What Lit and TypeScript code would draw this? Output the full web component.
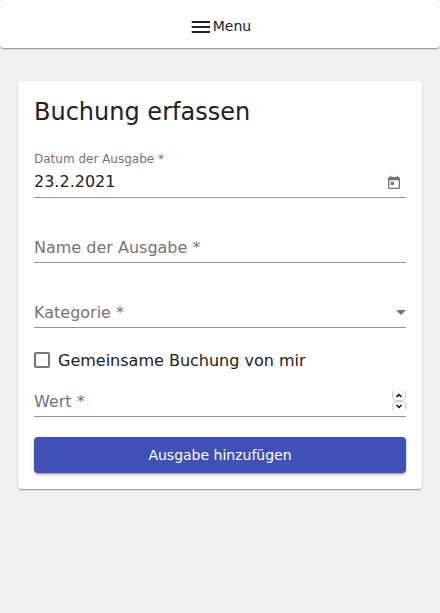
import { LitElement, html, css } from "lit";
import { customElement, property } from "lit/decorators.js";

@customElement("app-field")
class AppField extends LitElement {
  @property() label = "";
  @property() value = "";

  static styles = css`
    :host { display: flex; flex-direction: column; box-sizing: border-box; height: 50px; border-bottom: 1px solid #949494; }
    .float { height: 14px; margin-top: 4px; font-size: 12px; line-height: 14px; color: #757575; }
    .row { display: flex; align-items: center; justify-content: space-between; height: 20px; margin-top: auto; margin-bottom: 4px; }
    .text { line-height: 20px; color: #212121; }
    .placeholder { color: #757575; }
    .filled { margin-bottom: 5px; }
  `;

  render() {
    return this.value
      ? html`<div class="float">${this.label}</div>
          <div class="row filled"><span class="text">${this.value}</span><slot></slot></div>`
      : html`<div class="row"><span class="text placeholder">${this.label}</span><slot></slot></div>`;
  }
}

@customElement("app-root")
class AppRoot extends LitElement {
  static styles = css`
    :host {
      display: block; box-sizing: border-box; min-height: 613px; background: #f0f0f0;
      font: 16px/20px "DejaVu Sans", sans-serif; color: #212121;
    }
    .bar {
      display: flex; align-items: center; justify-content: center; box-sizing: border-box; height: 48px; padding-top: 6px;
      background: #fff; border-radius: 4px; font-size: 14px;
      box-shadow: 0 2px 1px -1px rgba(0,0,0,.2), 0 1px 1px 0 rgba(0,0,0,.14), 0 1px 3px 0 rgba(0,0,0,.12);
    }
    .menu { width: 24px; height: 24px; fill: #212121; }
    .bar-text { line-height: 20px; margin-bottom: 2px; }
    .card {
      display: flex; flex-direction: column; box-sizing: border-box; height: 408px; margin: 33px 18px 0; padding: 16px;
      background: #fff; border-radius: 4px;
      box-shadow: 0 2px 1px -1px rgba(0,0,0,.2), 0 1px 1px 0 rgba(0,0,0,.14), 0 1px 3px 0 rgba(0,0,0,.12);
    }
    h1 { margin: 0 0 22px; padding-top: 1px; font-size: 24px; font-weight: 400; line-height: 28px; }
    .spaced { margin-top: 15px; }
    .check { display: flex; align-items: center; gap: 8px; height: 20px; margin-top: 22px; }
    .check-label { padding-top: 2px; }
    .box { box-sizing: border-box; width: 16px; height: 16px; border: 2px solid #757575; border-radius: 2px; }
    .amount { height: 47px; }
    .calendar { width: 16px; height: 16px; margin: 2px 4px 0 0; fill: #757575; }
    .arrow { width: 10px; height: 5px; margin-bottom: 1px; fill: #757575; }
    .spinner { width: 14px; height: 20px; margin-bottom: 2px; fill: none; }
    .edge { stroke: #d0cbc7; }
    .chevron { stroke: #111; stroke-width: 1.6; }
    button {
      height: 36px; margin-top: 20px; padding: 0; border: 0; border-radius: 4px; background: #3f51b5; color: #fff;
      font: 14px/36px "DejaVu Sans", sans-serif;
      box-shadow: 0 3px 1px -2px rgba(0,0,0,.2), 0 2px 2px 0 rgba(0,0,0,.14), 0 1px 5px 0 rgba(0,0,0,.12);
    }
  `;

  render() {
    return html`
      <header class="bar">
        <svg class="menu" viewBox="0 0 24 24"><path d="M2.700 18h18.300v-2H2.700v2zm0-5h18.300v-2H2.700v2zm0-7v2h18.300V6H2.700z" /></svg>
        <span class="bar-text">Menu</span>
      </header>
      <main class="card">
        <h1>Buchung erfassen</h1>
        <app-field label="Datum der Ausgabe *" value="23.2.2021">
          <svg class="calendar" viewBox="0 0 24 24"><path d="M19 3h-1V1h-2v2H8V1H6v2H5c-1.11 0-1.99.9-1.99 2L3 19c0 1.1.89 2 2 2h14c1.1 0 2-.9 2-2V5c0-1.1-.9-2-2-2zm0 16H5V8h14v11zM7 10h5v5H7z" /></svg>
        </app-field>
        <app-field class="spaced" label="Name der Ausgabe *"></app-field>
        <app-field class="spaced" label="Kategorie *">
          <svg class="arrow" viewBox="0 0 10 5"><path d="M0 0l5 5 5-5z" /></svg>
        </app-field>
        <div class="check"><span class="box"></span><span class="check-label">Gemeinsame Buchung von mir</span></div>
        <app-field class="amount" label="Wert *">
          <svg class="spinner" viewBox="0 0 14 20">
            <path class="edge" d="M.5 0v5q0 4.500 4.500 4.500h4q4.500 0 4.500-4.500V0M.5 19v-4q0-4.500 4.500-4.500h4q4.500 0 4.500 4.500v4" />
            <path class="chevron" d="M4.500 6L7 3.700 9.500 6M4.500 14L7 16.300 9.500 14" />
          </svg>
        </app-field>
        <button>Ausgabe hinzufügen</button>
      </main>
    `;
  }
}
